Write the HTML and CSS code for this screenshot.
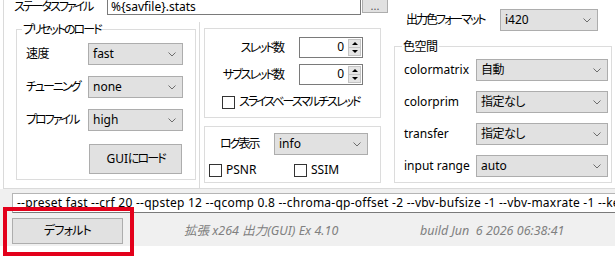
FILE: index.html
```html
<!DOCTYPE html>
<html>
  <head>
    <meta charset="utf-8">
    <title>拡張 x264 出力(GUI) Ex</title>
    <link rel="stylesheet" href="styles.css">
  </head>
  <body>
    <div class="tabpage">
      <div class="leftmid">
        <div class="status-row">
          <span class="status-label ja">ステータスファイル</span>
          <div class="textbox">%{savfile}.stats</div>
          <button class="win-button browse-button">...</button>
        </div>
        <div class="body-row">
          <div class="left-panel">
            <fieldset class="group preset-group">
              <legend class="ja">プリセットのロード</legend>
              <div class="form-row">
                <span class="preset-label kanji">速度</span>
                <div class="combo preset-combo"><span>fast</span><svg width="8" height="5" viewBox="0 0 8 5"><polyline points="0.5,0.5 4,4 7.5,0.5" fill="none" stroke="#6d6d6d" stroke-width="1"/></svg></div>
              </div>
              <div class="form-row">
                <span class="preset-label ja">チューニング</span>
                <div class="combo preset-combo"><span>none</span><svg width="8" height="5" viewBox="0 0 8 5"><polyline points="0.5,0.5 4,4 7.5,0.5" fill="none" stroke="#6d6d6d" stroke-width="1"/></svg></div>
              </div>
              <div class="form-row">
                <span class="preset-label ja">プロファイル</span>
                <div class="combo preset-combo"><span>high</span><svg width="8" height="5" viewBox="0 0 8 5"><polyline points="0.5,0.5 4,4 7.5,0.5" fill="none" stroke="#6d6d6d" stroke-width="1"/></svg></div>
              </div>
              <button class="win-button load-button">GUI<span class="ja">にロード</span></button>
            </fieldset>
          </div>
          <div class="mid-col">
            <div class="panel thread-panel">
              <div class="form-row">
                <span class="thread-label ja">スレッド数</span>
                <div class="spin">
                  <span class="spin-val">0</span>
                  <div class="spin-btns"><span class="spin-up"></span><span class="spin-down"></span></div>
                </div>
              </div>
              <div class="form-row">
                <span class="thread-label ja">サブスレッド数</span>
                <div class="spin">
                  <span class="spin-val">0</span>
                  <div class="spin-btns"><span class="spin-up"></span><span class="spin-down"></span></div>
                </div>
              </div>
              <div class="check-row slice-row"><span class="checkbox"></span><span class="ja">スライスベースマルチスレッド</span></div>
            </div>
            <div class="panel log-panel">
              <div class="form-row">
                <span class="log-label ja">ログ表示</span>
                <div class="combo log-combo"><span>info</span><svg width="8" height="5" viewBox="0 0 8 5"><polyline points="0.5,0.5 4,4 7.5,0.5" fill="none" stroke="#6d6d6d" stroke-width="1"/></svg></div>
              </div>
              <div class="check-line">
                <div class="check-row psnr"><span class="checkbox"></span>PSNR</div>
                <div class="check-row ssim"><span class="checkbox"></span>SSIM</div>
              </div>
            </div>
          </div>
        </div>
      </div>
      <div class="right-col">
        <div class="form-row format-row">
          <span class="format-label ja">出力色フォーマット</span>
          <div class="combo format-combo"><span>i420</span><svg width="8" height="5" viewBox="0 0 8 5"><polyline points="0.5,0.5 4,4 7.5,0.5" fill="none" stroke="#6d6d6d" stroke-width="1"/></svg></div>
        </div>
        <fieldset class="group color-group">
          <legend class="kanji">色空間</legend>
          <div class="form-row">
            <span class="color-label">colormatrix</span>
            <div class="combo color-combo"><span class="kanji">自動</span><svg width="8" height="5" viewBox="0 0 8 5"><polyline points="0.5,0.5 4,4 7.5,0.5" fill="none" stroke="#6d6d6d" stroke-width="1"/></svg></div>
          </div>
          <div class="form-row">
            <span class="color-label">colorprim</span>
            <div class="combo color-combo"><span class="kanji">指定なし</span><svg width="8" height="5" viewBox="0 0 8 5"><polyline points="0.5,0.5 4,4 7.5,0.5" fill="none" stroke="#6d6d6d" stroke-width="1"/></svg></div>
          </div>
          <div class="form-row">
            <span class="color-label">transfer</span>
            <div class="combo color-combo"><span class="kanji">指定なし</span><svg width="8" height="5" viewBox="0 0 8 5"><polyline points="0.5,0.5 4,4 7.5,0.5" fill="none" stroke="#6d6d6d" stroke-width="1"/></svg></div>
          </div>
          <div class="form-row range-row">
            <span class="color-label">input range</span>
            <div class="combo color-combo"><span>auto</span><svg width="8" height="5" viewBox="0 0 8 5"><polyline points="0.5,0.5 4,4 7.5,0.5" fill="none" stroke="#6d6d6d" stroke-width="1"/></svg></div>
          </div>
        </fieldset>
      </div>
    </div>
    <div class="bottom">
      <div class="cmdline">--preset fast --crf 20 --qpstep 12 --qcomp 0.8 --chroma-qp-offset -2 --vbv-bufsize -1 --vbv-maxrate -1 --keyint -1</div>
      <div class="footer">
        <button class="win-button default-button"><span class="ja-wide">デフォルト</span></button>
        <span class="version">拡張 x264 出力(GUI) Ex 4.10</span>
        <span class="build">build Jun  6 2026 06:38:41</span>
      </div>
    </div>
    <div class="highlight"></div>
  </body>
</html>
```

FILE: styles.css
```css
* {
  box-sizing: border-box;
}

body {
  margin: 0;
  width: 615px;
  height: 260px;
  overflow: hidden;
  position: relative;
  background: #fff;
  color: #000;
  font-family: "Noto Sans", "Noto Sans CJK JP", sans-serif;
  font-size: 12px;
  font-feature-settings: "palt";
  line-height: 16px;
  white-space: nowrap;
}

/* Meiryo UI kana are much narrower than Noto CJK, squeeze them */
.ja {
  letter-spacing: -2px;
}

.ja-wide {
  letter-spacing: -0.8px;
}

.kanji {
  letter-spacing: -0.5px;
}

.tabpage {
  display: flex;
  margin-left: 3px;
  width: 640px;
  height: 189px;
  border-left: 1px solid #dadada;
  border-bottom: 1px solid #dadada;
}

.leftmid {
  width: 386px;
  flex: none;
}

.status-row {
  display: flex;
  align-items: flex-start;
  margin-top: -5px;
  height: 19px;
  padding-left: 10px;
  line-height: 13px;
}

.status-label {
  width: 93px;
  padding-top: 5px;
}

.textbox {
  width: 254px;
  height: 20px;
  border: 1px solid #7a7a7a;
  padding: 4px 0 0 3px;
}

.win-button {
  font: inherit;
  font-feature-settings: "palt";
  background: #e1e1e1;
  border: 1px solid #adadad;
  padding: 0;
  color: #000;
}

.browse-button {
  width: 26px;
  height: 18px;
  margin-left: 1px;
  padding-top: 4px;
  color: #555;
  font-size: 11px;
  line-height: 12px;
}

.body-row {
  display: flex;
}

.left-panel {
  width: 196px;
  height: 167px;
  margin-top: 8px;
  padding-left: 12px;
  border-right: 1px solid #dadada;
}

.group {
  margin: 0;
  padding: 0;
  border: 1px solid #dcdcdc;
}

.group legend {
  margin-left: -4px;
  padding: 0 1px;
  line-height: 15px;
}

.form-row {
  display: flex;
  align-items: center;
}

.combo {
  display: flex;
  align-items: center;
  justify-content: space-between;
  height: 22px;
  border: 1px solid #adadad;
  background: #e1e1e1;
  padding: 0 6px 0 4px;
}

.preset-group {
  width: 180px;
  height: 158px;
  padding: 6px 0 0 9px;
}

.preset-group .form-row + .form-row {
  margin-top: 11px;
}

.preset-label {
  width: 62px;
}

.preset-combo {
  width: 95px;
}

.load-button {
  display: block;
  width: 93px;
  height: 30px;
  margin: 13px 0 0 63px;
}

.mid-col {
  width: 177px;
  margin: 14px 0 0 4px;
}

.panel {
  border: 1px solid #dcdcdc;
}

.thread-panel {
  height: 90px;
  padding-top: 8px;
}

.thread-panel .form-row + .form-row {
  margin-top: 6px;
}

.thread-label {
  width: 78px;
  text-align: right;
}

.spin {
  display: flex;
  width: 64px;
  height: 21px;
  margin-left: 16px;
  border: 1px solid #7a7a7a;
}

.spin-val {
  flex: 1;
  text-align: right;
  padding: 1px 3px 0 0;
}

.spin-btns {
  display: flex;
  flex-direction: column;
  width: 15px;
  padding: 1px;
}

.spin-btns span {
  flex: 1;
  display: flex;
  align-items: center;
  justify-content: center;
  background: #e5e5e5;
  border: 1px solid #c4c4c4;
}

.spin-btns span + span {
  margin-top: -1px;
}

.spin-up::after {
  content: "";
  border-left: 3px solid transparent;
  border-right: 3px solid transparent;
  border-bottom: 3px solid #000;
}

.spin-down::after {
  content: "";
  border-left: 3px solid transparent;
  border-right: 3px solid transparent;
  border-top: 3px solid #000;
}

.check-row {
  display: flex;
  align-items: center;
}

.checkbox {
  width: 13px;
  height: 13px;
  border: 1px solid #333;
  background: #fff;
  margin-right: 4px;
}

.slice-row {
  margin: 9px 0 0 17px;
}

.log-panel {
  height: 57px;
  margin-top: 8px;
  padding-top: 6px;
}

.log-label {
  width: 69px;
  padding-left: 15px;
}

.log-combo {
  width: 94px;
}

.check-line {
  display: flex;
  margin-top: 7px;
}

.psnr {
  margin-left: 4px;
  width: 85px;
}

.right-col {
  width: 225px;
  flex: none;
}

.format-row {
  margin-top: 9px;
  padding-left: 16px;
}

.format-label {
  width: 94px;
}

.format-combo {
  width: 98px;
}

.color-group {
  width: 218px;
  height: 144px;
  margin: 8px 0 0 4px;
  padding: 5px 0 0 9px;
}

.color-group legend {
  margin-left: -2px;
}

.color-group .form-row + .form-row {
  margin-top: 10px;
}

.color-group .range-row {
  margin-top: 8px;
}

.color-label {
  width: 72px;
}

.color-combo {
  width: 132px;
}

.bottom {
  height: 57px;
  background: #f0f0f0;
  padding-top: 4px;
}

.cmdline {
  margin-left: 12px;
  width: 620px;
  height: 20px;
  background: #fff;
  border: 1px solid #b5b5b5;
  border-bottom-color: #7a7a7a;
  border-right: none;
  padding: 1px 0 0 4px;
  letter-spacing: 0.25px;
  overflow: hidden;
}

.footer {
  display: flex;
  align-items: center;
  padding-top: 5px;
}

.default-button {
  flex: none;
  width: 111px;
  height: 26px;
  margin-left: 12px;
}

.version,
.build {
  flex: none;
  color: #808080;
  font-style: italic;
  font-size: 12.5px;
  white-space: pre;
}

.version {
  width: 236px;
  margin-left: 61px;
}

.highlight {
  position: absolute;
  left: 3px;
  top: 207px;
  width: 131px;
  height: 49px;
  border: 4px solid #e3001b;
}
```
